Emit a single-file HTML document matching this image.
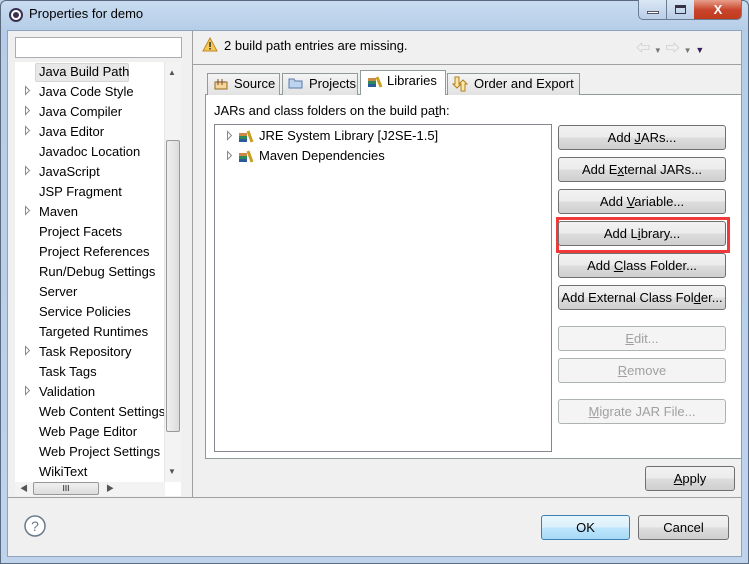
<!DOCTYPE html>
<html><head><style>
*{box-sizing:border-box;margin:0;padding:0}
body{width:749px;height:564px;position:relative;overflow:hidden;font:13px "Liberation Sans","Noto Sans CJK SC",sans-serif;color:#000;background:#bcd3ec}
.a{position:absolute}
.frame{left:0;top:0;width:749px;height:564px;background:linear-gradient(#c9dcf1,#b5cde8 30px,#bfd4ec);border:1px solid #5a6b80;border-radius:6px 6px 0 0}
.content{left:7px;top:30px;width:735px;height:527px;background:#f0f0f0;border:1px solid #8ea3bd}
.btn{position:absolute;height:25px;border:1px solid #707070;border-radius:3px;background:linear-gradient(#f2f2f2 0,#ebebeb 50%,#dddddd 51%,#cfcfcf 100%);text-align:center;line-height:23px;font-size:13px}
.dis{border-color:#adb2b5;background:#f4f4f4;color:#a0a0a0}
.tree div{position:absolute;left:24px;white-space:nowrap}
.arr{position:absolute;left:10px;width:0;height:0;border-left:5px solid #fff;border-top:4px solid transparent;border-bottom:4px solid transparent}
.arrw{position:absolute;width:7px;height:9px}
u{text-decoration:underline}
.tab{position:absolute;top:73px;height:22px;border:1px solid #919b9c;border-bottom:none;background:linear-gradient(#f4f4f4,#e2e2e2);line-height:20px;padding-left:26px}
</style></head><body>
<div class="a frame"></div>
<svg class="a" style="left:8px;top:7px" width="16" height="16"><circle cx="8" cy="8" r="7" fill="#3a3050"/><circle cx="8" cy="8" r="5" fill="#fff"/><circle cx="8" cy="8" r="3" fill="#3a3050"/></svg>
<div class="a" style="left:29px;top:6px;font-size:13px">Properties for demo</div>
<div class="a" style="left:638px;top:0;width:104px;height:20px;border:1px solid #6b7d93;border-top:none;border-radius:0 0 5px 5px;overflow:hidden;background:linear-gradient(#dbe7f5,#b9cde6)">
 <div class="a" style="left:27px;top:0;width:1px;height:20px;background:#6b7d93"></div>
 <div class="a" style="left:55px;top:0;width:48px;height:20px;background:linear-gradient(#e8a08c,#c8442a 50%,#c0391c)"></div>
 <div class="a" style="left:8px;top:11px;width:12px;height:3px;border:1px solid #556;background:#fff"></div>
 <div class="a" style="left:36px;top:5px;width:11px;height:9px;border:1px solid #334;border-top-width:3px"></div>
 <div class="a" style="left:55px;top:0;width:48px;text-align:center;color:#fff;font-weight:bold;font-size:13px;line-height:19px">X</div>
</div>
<div class="a content"></div>
<!-- left pane -->
<div class="a" style="left:15px;top:37px;width:167px;height:21px;background:#fff;border:1px solid #abadb3"></div>
<div class="a" style="left:15px;top:62px;width:166px;height:434px;background:#fff"></div>
<div class="a" style="left:35px;top:63px;width:94px;height:19px;background:#e8e8e8;border:1px solid #d6d6d6;border-radius:2px"></div>
<div class="a tree" style="left:15px;top:64px;width:150px;height:418px;overflow:hidden">
<div style="top:0">Java Build Path</div>
<div style="top:20px">Java Code Style</div><div style="top:40px">Java Compiler</div><div style="top:60px">Java Editor</div><div style="top:80px">Javadoc Location</div><div style="top:100px">JavaScript</div><div style="top:120px">JSP Fragment</div><div style="top:140px">Maven</div><div style="top:160px">Project Facets</div><div style="top:180px">Project References</div><div style="top:200px">Run/Debug Settings</div><div style="top:220px">Server</div><div style="top:240px">Service Policies</div><div style="top:260px">Targeted Runtimes</div><div style="top:280px">Task Repository</div><div style="top:300px">Task Tags</div><div style="top:320px">Validation</div><div style="top:340px">Web Content Settings</div><div style="top:360px">Web Page Editor</div><div style="top:380px">Web Project Settings</div><div style="top:400px">WikiText</div>
</div>
<svg class="a" style="left:24px;top:80px" width="8" height="340" fill="#fff" stroke="#8a8a8a">
<path d="M1.5 6.5l4 4-4 4z" transform="translate(0,0)"/><path d="M1.5 26.5l4 4-4 4z"/><path d="M1.5 46.5l4 4-4 4z"/><path d="M1.5 86.5l4 4-4 4z"/><path d="M1.5 126.5l4 4-4 4z"/><path d="M1.5 266.5l4 4-4 4z"/><path d="M1.5 306.5l4 4-4 4z"/></svg>
<div class="a" style="left:164px;top:62px;width:17px;height:420px;background:#f3f3f3;border-left:1px solid #e6e6e6"></div>
<div class="a" style="left:166px;top:140px;width:14px;height:292px;border:1px solid #989898;border-radius:2px;background:linear-gradient(90deg,#f0f0f0,#dcdcdc)"></div>
<div class="a" style="left:168px;top:68px;font-size:8px;color:#555">▲</div>
<div class="a" style="left:168px;top:467px;font-size:8px;color:#555">▼</div>
<div class="a" style="left:15px;top:482px;width:150px;height:14px;background:#f3f3f3"></div>
<div class="a" style="left:33px;top:482px;width:66px;height:13px;border:1px solid #989898;border-radius:2px;background:linear-gradient(#f0f0f0,#dcdcdc);text-align:center;font-size:8px;line-height:11px">III</div>
<div class="a" style="left:20px;top:483px;font-size:8px;color:#555">◀</div>
<div class="a" style="left:106px;top:483px;font-size:8px;color:#555">▶</div>
<div class="a" style="left:192px;top:30px;width:1px;height:468px;background:#a0a0a0"></div>
<!-- right header -->
<svg class="a" style="left:202px;top:37px" width="16" height="16"><path d="M8 1L15 14H1z" fill="#f6c85a" stroke="#c08a20"/><rect x="7.3" y="5" width="1.5" height="5" fill="#333"/><rect x="7.3" y="11" width="1.5" height="1.5" fill="#333"/></svg>
<div class="a" style="left:224px;top:38px">2 build path entries are missing.</div>
<div class="a" style="left:636px;top:38px;color:#c0c0c0;font-size:14px">⇦ <span style="font-size:8px;color:#777">▼</span> ⇨ <span style="font-size:8px;color:#777">▼</span> <span style="font-size:9px;color:#3a1a5a">▼</span></div>
<div class="a" style="left:193px;top:64px;width:549px;height:1px;background:#a0a0a0"></div>
<!-- tabs -->
<div class="a" style="left:205px;top:94px;width:537px;height:365px;background:#fff;border:1px solid #919b9c"></div>
<div class="tab" style="left:207px;width:73px">Source</div>
<div class="tab" style="left:282px;width:76px">Projects</div>
<div class="tab" style="left:360px;top:70px;height:25px;width:86px;background:#fff">Libraries</div>
<div class="tab" style="left:447px;width:133px">Order and Export</div>
<svg class="a" style="left:213px;top:77px" width="16" height="14"><path d="M2 5h12v7H2z" fill="#f5d59a" stroke="#9a6a20"/><path d="M5 2v6M9 2v6M3 5h10" stroke="#7a5020"/></svg>
<svg class="a" style="left:288px;top:76px" width="16" height="14"><path d="M1 3h5l1 2h7v7H1z" fill="#bcd4f0" stroke="#5a7aa8"/></svg>
<svg class="a" style="left:367px;top:75px" width="16" height="14"><rect x="1" y="3" width="8" height="3" fill="#c84"/><rect x="1" y="6" width="8" height="3" fill="#2a8a5a"/><rect x="1" y="9" width="8" height="3" fill="#2a5a9a"/><path d="M10 2l4 10" stroke="#c8a020" stroke-width="3"/></svg>
<svg class="a" style="left:452px;top:76px" width="18" height="16"><path d="M3 1v7H1l4 4 4-4H7V1z" fill="#fde6a8" stroke="#b08020"/><path d="M13 15V8h2l-4-4-4 4h2v7z" fill="#fde6a8" stroke="#b08020"/></svg>
<div class="a" style="left:214px;top:103px">JARs and class folders on the build pa<u>t</u>h:</div>
<div class="a" style="left:214px;top:124px;width:338px;height:328px;border:1px solid #828790;background:#fff"></div>
<svg class="a" style="left:226px;top:130px" width="8" height="30" fill="#fff" stroke="#8a8a8a"><path d="M1.5 1.5l4 4-4 4z"/><path d="M1.5 21.5l4 4-4 4z"/></svg>
<svg class="a" style="left:238px;top:129px" width="16" height="14"><rect x="1" y="4" width="8" height="3" fill="#c84"/><rect x="1" y="7" width="8" height="3" fill="#2a8a5a"/><rect x="1" y="10" width="8" height="3" fill="#2a5a9a"/><path d="M10 2l4 11" stroke="#c8a020" stroke-width="3"/></svg>
<svg class="a" style="left:238px;top:149px" width="16" height="14"><rect x="1" y="4" width="8" height="3" fill="#c84"/><rect x="1" y="7" width="8" height="3" fill="#2a8a5a"/><rect x="1" y="10" width="8" height="3" fill="#2a5a9a"/><path d="M10 2l4 11" stroke="#c8a020" stroke-width="3"/></svg>
<div class="a" style="left:259px;top:128px">JRE System Library [J2SE-1.5]</div>
<div class="a" style="left:259px;top:148px">Maven Dependencies</div>
<!-- buttons -->
<div class="btn" style="left:558px;top:125px;width:168px">Add <u>J</u>ARs...</div>
<div class="btn" style="left:558px;top:157px;width:168px">Add E<u>x</u>ternal JARs...</div>
<div class="btn" style="left:558px;top:189px;width:168px">Add <u>V</u>ariable...</div>
<div class="a" style="left:556px;top:217px;width:174px;height:36px;border:3px solid #f03a3a"></div>
<div class="btn" style="left:558px;top:221px;width:168px">Add L<u>i</u>brary...</div>
<div class="btn" style="left:558px;top:253px;width:168px">Add <u>C</u>lass Folder...</div>
<div class="btn" style="left:558px;top:285px;width:168px">Add External Class Fol<u>d</u>er...</div>
<div class="btn dis" style="left:558px;top:326px;width:168px"><u>E</u>dit...</div>
<div class="btn dis" style="left:558px;top:358px;width:168px"><u>R</u>emove</div>
<div class="btn dis" style="left:558px;top:399px;width:168px"><u>M</u>igrate JAR File...</div>
<div class="btn" style="left:645px;top:466px;width:90px"><u>A</u>pply</div>
<div class="a" style="left:8px;top:497px;width:733px;height:1px;background:#a0a0a0"></div>
<svg class="a" style="left:23px;top:514px" width="24" height="24"><circle cx="12" cy="12" r="10" fill="#fff" stroke="#6a7a8a" stroke-width="1.5"/><text x="12" y="17" text-anchor="middle" font-family="Liberation Sans" font-size="14" fill="#6a7a8a">?</text></svg>
<div class="btn" style="left:541px;top:515px;width:89px;border-color:#3c7fb1;background:linear-gradient(#eaf6fd,#d9f0fc 50%,#bee6fd 51%,#a7d9f5)">OK</div>
<div class="btn" style="left:638px;top:515px;width:91px">Cancel</div>
</body></html>
